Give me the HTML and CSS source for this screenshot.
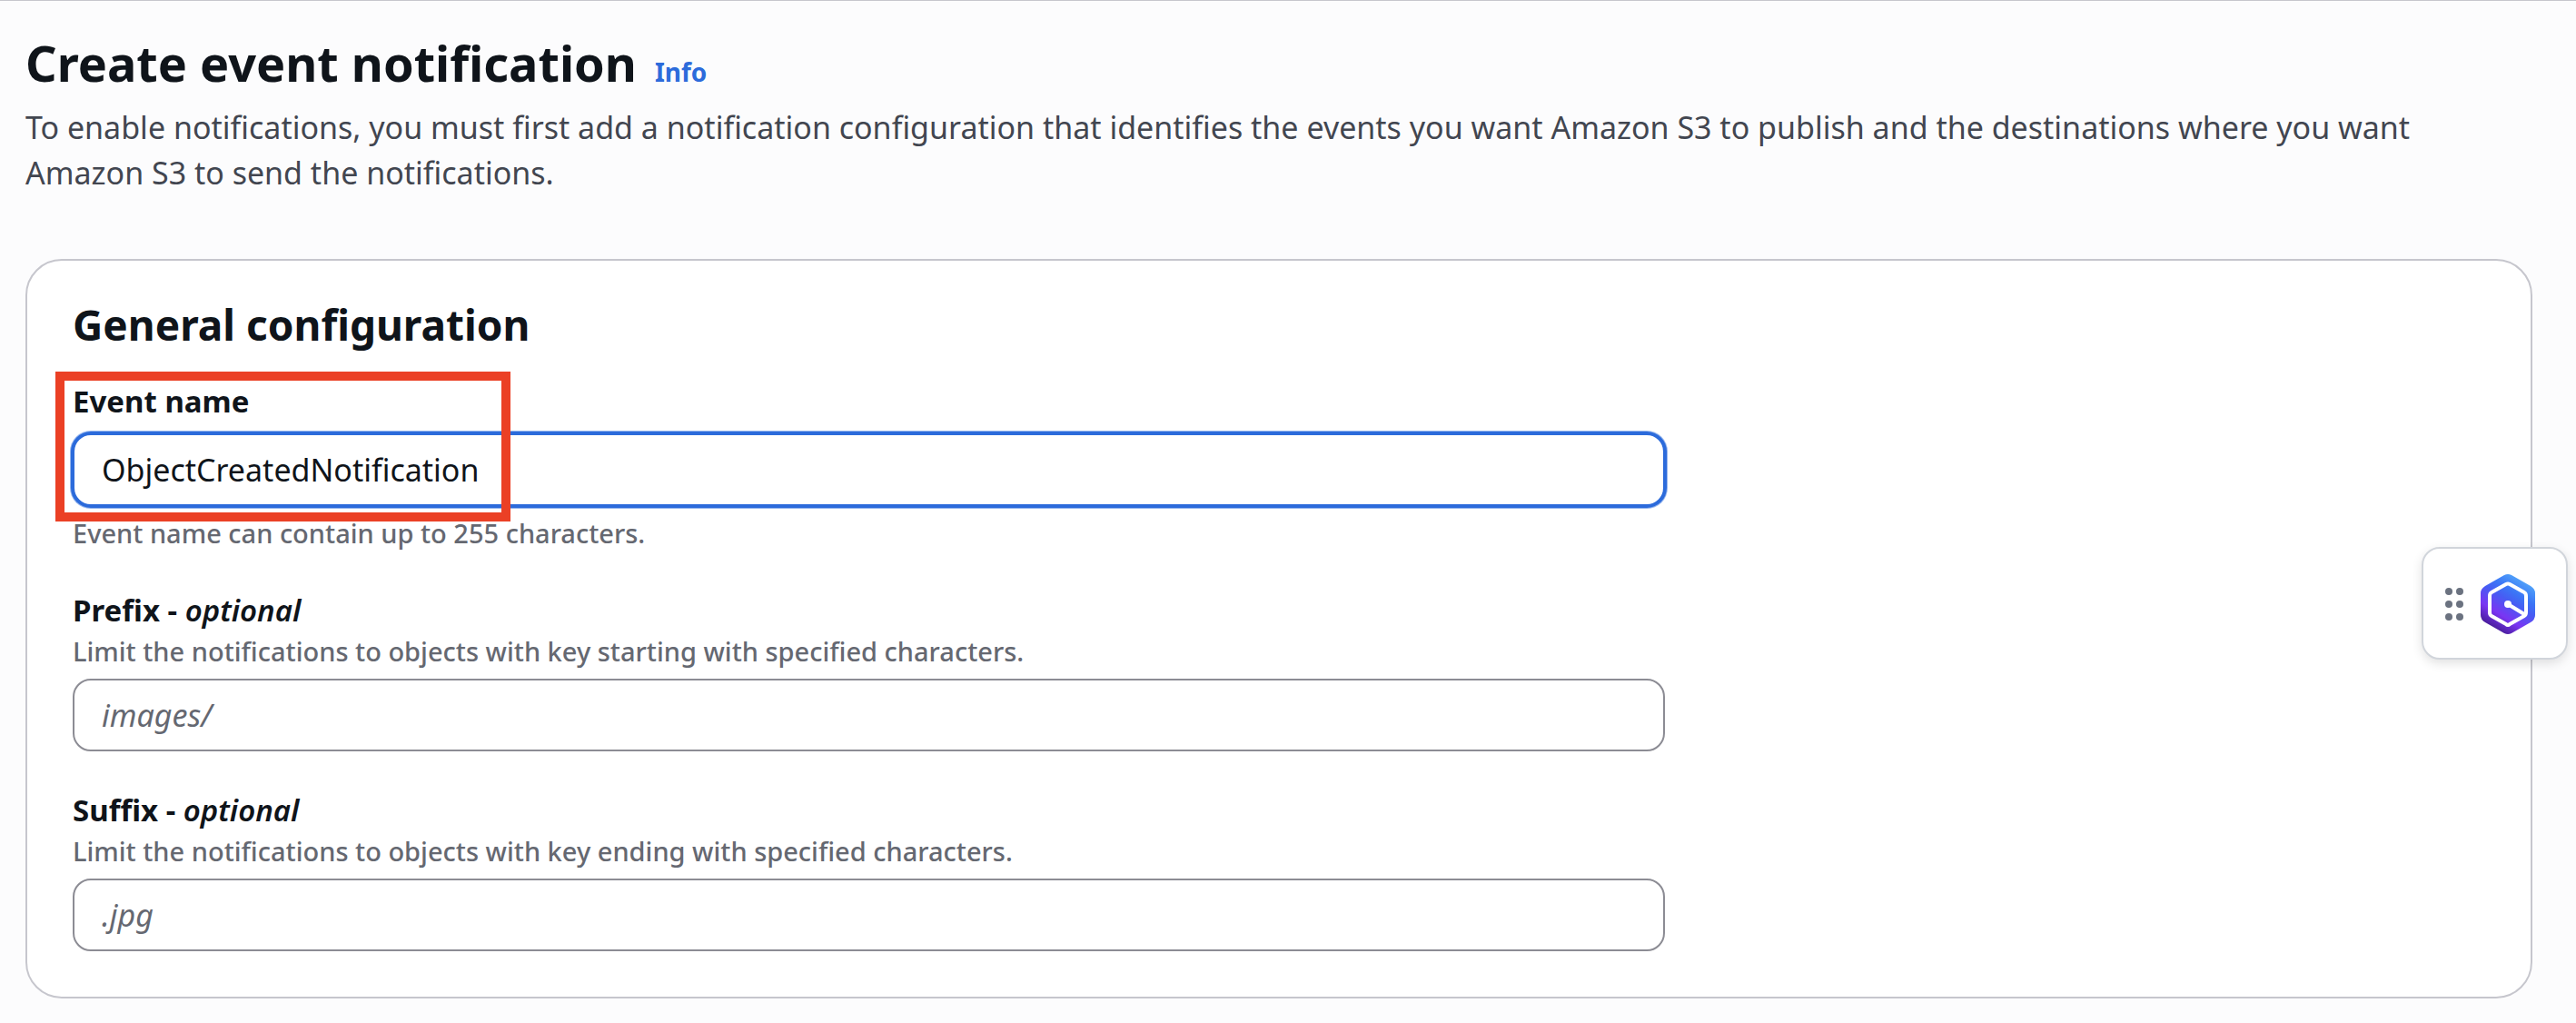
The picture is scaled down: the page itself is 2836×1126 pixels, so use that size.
FILE: index.html
```html
<!DOCTYPE html>
<html lang="en">
<head>
<meta charset="utf-8">
<title>Create event notification</title>
<link rel="stylesheet" href="styles.css">
</head>
<body>
<main class="page">
  <header class="page-header">
    <div class="title-row">
      <h1 class="page-title">Create event notification</h1>
      <a class="info-link" href="#info">Info</a>
    </div>
    <p class="page-description">To enable notifications, you must first add a notification configuration that identifies the events you want Amazon S3 to publish and the destinations where you want Amazon S3 to send the notifications.</p>
  </header>

  <form class="card">
    <h2 class="card-title">General configuration</h2>
    <div class="fields">
      <div class="field">
        <label class="label" for="event-name">Event name</label>
        <input class="input input-active" id="event-name" type="text" value="ObjectCreatedNotification" aria-describedby="event-name-note">
        <p class="hint hint-below" id="event-name-note">Event name can contain up to 255 characters.</p>
        <div class="highlight" aria-hidden="true"></div>
      </div>
      <div class="field">
        <label class="label" for="prefix">Prefix - <em class="optional">optional</em></label>
        <p class="hint" id="prefix-note">Limit the notifications to objects with key starting with specified characters.</p>
        <input class="input" id="prefix" type="text" placeholder="images/" aria-describedby="prefix-note">
      </div>
      <div class="field">
        <label class="label" for="suffix">Suffix - <em class="optional">optional</em></label>
        <p class="hint" id="suffix-note">Limit the notifications to objects with key ending with specified characters.</p>
        <input class="input" id="suffix" type="text" placeholder=".jpg" aria-describedby="suffix-note">
      </div>
    </div>
  </form>
</main>

<button class="assistant" type="button" aria-label="Open assistant">
  <svg class="grip" viewBox="0 0 20 36" aria-hidden="true">
    <circle cx="4" cy="4" r="4"/><circle cx="16" cy="4" r="4"/>
    <circle cx="4" cy="18" r="4"/><circle cx="16" cy="18" r="4"/>
    <circle cx="4" cy="32" r="4"/><circle cx="16" cy="32" r="4"/>
  </svg>
  <svg class="logo" viewBox="0 0 60 66" aria-hidden="true">
    <defs>
      <linearGradient id="logo-fill" x1="50" y1="4" x2="14" y2="62" gradientUnits="userSpaceOnUse">
        <stop offset="0" stop-color="#55adfa"/>
        <stop offset="0.3" stop-color="#3b75f6"/>
        <stop offset="0.46" stop-color="#475cf3"/>
        <stop offset="0.72" stop-color="#7a35f3"/>
        <stop offset="1" stop-color="#421a8e"/>
      </linearGradient>
    </defs>
    <path fill="url(#logo-fill)" d="M26 1Q30-1 34 1L55 13Q60 16 60 21V45Q60 50 55 53L34 65Q30 67 26 65L5 53Q0 50 0 45V21Q0 16 5 13Z"/>
    <path fill="none" stroke="#fff" stroke-width="4" stroke-linejoin="round" d="M28 11Q30 10 32 11L48 20Q50 21 50 24V42Q50 45 48 46L32 55Q30 57 28 55L12 46Q10 45 10 42V24Q10 21 12 20Z"/>
    <path stroke="#fff" stroke-width="4" d="M30 33L48 44"/>
    <circle cx="30" cy="33" r="4" fill="#fff"/>
  </svg>
</button>
</body>
</html>
```
FILE: styles.css
```css
* {
  box-sizing: border-box;
}

body {
  margin: 0;
  background: #fcfcfd;
  color: #0f141a;
  font-family: "Noto Sans", "Open Sans", sans-serif;
  font-size: 34px;
  line-height: 50px;
}

h1,
h2,
p {
  margin: 0;
}

.page {
  border-top: 1px solid #c6c6cd;
  padding: 30px 48px 26px 28px;
}

.title-row {
  display: flex;
  align-items: baseline;
  gap: 20px;
}

.page-title {
  font-size: 54px;
  font-weight: 700;
  line-height: 76px;
}

.info-link {
  color: #2c6bdb;
  font-size: 28px;
  font-weight: 700;
  text-decoration: none;
}

.page-description {
  margin-top: 8px;
  color: #424650;
}

.card {
  margin-top: 70px;
  border: 2px solid #c6c6cd;
  border-radius: 40px;
  padding: 40px 50px 50px;
  background: #fff;
}

.card-title {
  font-size: 46px;
  font-weight: 700;
  line-height: 60px;
}

.fields {
  display: grid;
  gap: 40px;
  width: 66%;
  margin-top: 30px;
}

.field {
  position: relative;
  display: flex;
  flex-direction: column;
}

.label {
  font-size: 33px;
  font-weight: 700;
}

.optional {
  font-weight: 600;
}

.hint {
  color: #656871;
  font-size: 29px;
  font-weight: 500;
  line-height: 40px;
}

.hint-below {
  margin-top: 10px;
}

.input {
  width: 100%;
  height: 80px;
  margin: 10px 0 0;
  border: 2px solid #8c8c94;
  border-radius: 20px;
  padding: 0 30px;
  background: #fff;
  color: #0f141a;
  font: inherit;
}

.input::placeholder {
  color: #656871;
  font-style: italic;
  opacity: 1;
}

.input:focus,
.input-active {
  border-color: #2c6bdb;
  outline: none;
  box-shadow: 0 0 0 2px #2c6bdb, 0 0 0 3px #95b5ed;
}

/* Callout frame around the event name */
.highlight {
  position: absolute;
  top: -8px;
  left: -19px;
  width: 501px;
  height: 165px;
  border: 10px solid #eb4025;
  pointer-events: none;
}

.assistant {
  position: fixed;
  top: 602px;
  right: 9px;
  display: flex;
  align-items: center;
  gap: 19px;
  border: 2px solid #d1d5db;
  border-radius: 20px;
  padding: 28px 34px 26px 24px;
  background: #fff;
  box-shadow: 0 4px 12px rgba(0, 0, 0, 0.12);
}

.grip {
  width: 20px;
  height: 36px;
  fill: #6b7280;
}

.logo {
  width: 60px;
  height: 66px;
}
```
